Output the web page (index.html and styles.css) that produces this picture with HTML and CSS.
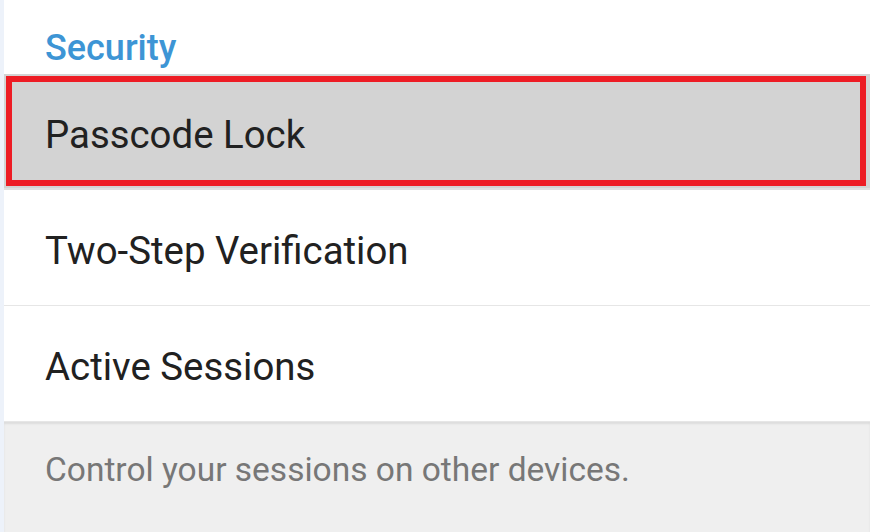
FILE: index.html
```html
<!DOCTYPE html>
<html lang="en">
  <head>
    <meta charset="UTF-8" />
    <title>Privacy and Security</title>
    <link rel="stylesheet" href="styles.css">
  </head>
  <body>
    <div class="settings">
      <div class="section-title">Security</div>
      <div class="row selected"><span>Passcode Lock</span></div>
      <div class="row">Two-Step Verification</div>
      <div class="row">Active Sessions</div>
      <div class="hint">Control your sessions on other devices.</div>
    </div>
  </body>
</html>
```

FILE: styles.css
```css
html, body {
  margin: 0;padding: 0;height: 100%;background: #edf2fa;
  font-family: Roboto, "Noto Sans", sans-serif;
}
.settings {
  margin-left: 4px;height: 100%;background: #ffffff;display: flex;flex-direction: column;
}
.section-title {
  height: 74px;box-sizing: border-box;padding: 27px 0 0 41px;
  color: #3d95d5;font-size: 36px;font-weight: 500;line-height: 1.17;
}
.row {
  height: 116px;box-sizing: border-box;padding: 6px 0 0 41px;
  display: flex;align-items: center;
  font-size: 38.4px;color: #212121;
  border-bottom: 1px solid #e6e6e6;
}
.row:last-of-type {border-bottom: none;}
.row.selected {
  background: #d3d3d3;border-bottom: 2px solid #e0e0e0;padding: 2px 4px 2px 2px;
}
.row.selected span {
  flex: 1;height: 100%;box-sizing: border-box;
  border: 6px solid #ed1c24;padding: 6px 0 0 33px;
  display: flex;align-items: center;
}
.hint {
  flex: 1;background: #efefef;box-shadow: inset 0 2px 2px rgba(0, 0, 0, 0.08);
  padding: 28px 0 0 41px;font-size: 33.5px;line-height: 1.17;color: #777777;
}
```
